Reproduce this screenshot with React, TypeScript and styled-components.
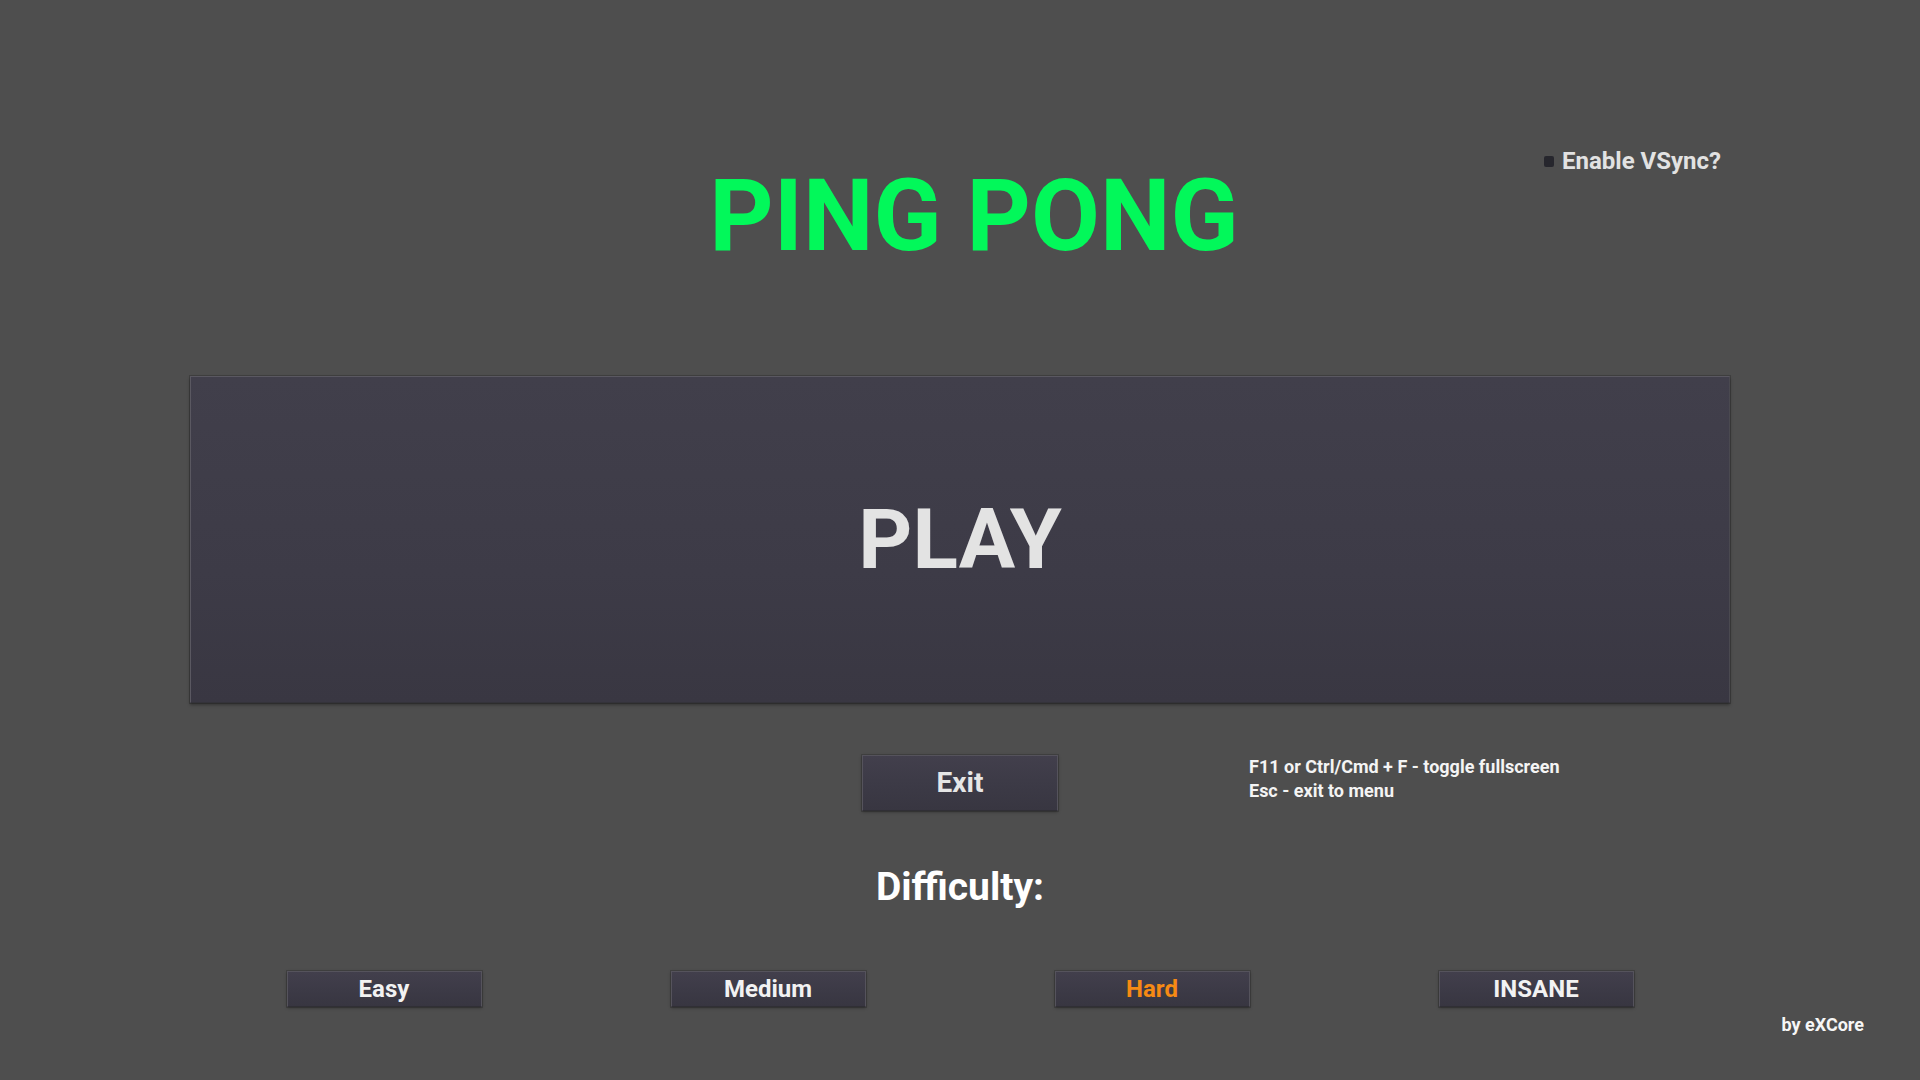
import React, { useState } from "react";
import styled, { createGlobalStyle } from "styled-components";

const GlobalStyle = createGlobalStyle`
  html, body {
    margin: 0;
    padding: 0;
    background: #4e4e4e;
  }
  body {
    font-family: Roboto, "Liberation Sans", sans-serif;
    font-weight: 700;
  }
  * { box-sizing: border-box; }
`;

const Page = styled.div`
  width: 1920px;
  height: 1080px;
  overflow: hidden;
  background: #4e4e4e;
  display: flex;
  flex-direction: column;
`;

const Header = styled.header`
  height: 376px;
  display: grid;
  grid-template-columns: 1fr auto 1fr;
  align-items: start;
`;

const Title = styled.h1`
  grid-column: 2;
  margin: 166px 0 0 28px;
  font-size: 100px;
  line-height: 1;
  font-weight: 700;
  color: #02f85a;
  letter-spacing: 0;
`;

const VSync = styled.label`
  grid-column: 3;
  justify-self: end;
  margin: 149px 199px 0 0;
  display: flex;
  align-items: center;
  gap: 8px;
  font-size: 24px;
  line-height: 1;
  color: #e2e2e2;
  cursor: pointer;
`;

const Box = styled.span<{ $on: boolean }>`
  width: 10px;
  height: 11px;
  border-radius: 2px;
  background: ${(p) => (p.$on ? "#02f85a" : "#26262d")};
  margin-top: 1px;
`;

const PlayPanel = styled.button`
  margin: 0 190px;
  height: 327px;
  border: 1px solid #5a5861;
  border-bottom-color: #34333a;
  border-right-color: #4a4950;
  background: linear-gradient(180deg, #413f4b 0%, #3d3b47 60%, #393742 100%);
  box-shadow: 0 0 0 1px rgba(0, 0, 0, 0.18), 0 2px 3px rgba(0, 0, 0, 0.35);
  display: flex;
  align-items: center;
  justify-content: center;
  font-family: Roboto, "Liberation Sans", sans-serif;
  font-weight: 700;
  font-size: 84px;
  line-height: 1;
  color: #e3e3e3;
  cursor: pointer;
  padding: 0;
`;

const MidRow = styled.div`
  margin-top: 52px;
  display: grid;
  grid-template-columns: 1fr auto 1fr;
  align-items: start;
`;

const Button = styled.button<{ $w: number; $h: number; $size: number; $color?: string }>`
  width: ${(p) => p.$w}px;
  height: ${(p) => p.$h}px;
  border: 1px solid #55535c;
  border-bottom-color: #302f35;
  background: linear-gradient(180deg, #423f4c 0%, #3c3a46 55%, #383641 100%);
  box-shadow: 0 0 0 1px rgba(0, 0, 0, 0.15), 0 1px 3px rgba(0, 0, 0, 0.35);
  font-family: Roboto, "Liberation Sans", sans-serif;
  font-weight: 700;
  font-size: ${(p) => p.$size}px;
  line-height: 1;
  color: ${(p) => p.$color || "#e6e6e6"};
  display: flex;
  align-items: center;
  justify-content: center;
  padding: 0;
  cursor: pointer;
`;

const ExitSlot = styled.div`
  grid-column: 2;
`;

const Help = styled.div`
  grid-column: 3;
  margin: 0 0 0 191px;
  font-size: 18px;
  line-height: 24px;
  color: #f4f4f4;
`;

const DifficultyLabel = styled.h2`
  margin: 57px 0 0;
  text-align: center;
  font-size: 39px;
  line-height: 1;
  font-weight: 700;
  color: #ffffff;
`;

const DiffGrid = styled.div`
  margin: 64px 192px 0;
  display: grid;
  grid-template-columns: repeat(4, 1fr);
  justify-items: center;
`;

const Footer = styled.footer`
  margin-top: 9px;
  padding-right: 56px;
  display: flex;
  justify-content: flex-end;
  font-size: 18px;
  line-height: 1;
  color: #f6f6f6;
`;

const levels = ["Easy", "Medium", "Hard", "INSANE"];

export default function App() {
  const [vsync, setVsync] = useState(false);
  const [level, setLevel] = useState("Hard");
  return (
    <>
      <GlobalStyle />
      <Page>
        <Header>
          <Title>PING PONG</Title>
          <VSync onClick={() => setVsync(!vsync)}>
            <Box $on={vsync} />
            Enable VSync?
          </VSync>
        </Header>
        <PlayPanel>PLAY</PlayPanel>
        <MidRow>
          <ExitSlot>
            <Button $w={196} $h={56} $size={28}>Exit</Button>
          </ExitSlot>
          <Help>
            <div>F11 or Ctrl/Cmd + F - toggle fullscreen</div>
            <div>Esc - exit to menu</div>
          </Help>
        </MidRow>
        <DifficultyLabel>Difficulty:</DifficultyLabel>
        <DiffGrid>
          {levels.map((l) => (
            <Button
              key={l}
              $w={195}
              $h={36}
              $size={24}
              $color={l === level ? "#f68a14" : "#f2f2f2"}
              onClick={() => setLevel(l)}
            >
              {l}
            </Button>
          ))}
        </DiffGrid>
        <Footer>by eXCore</Footer>
      </Page>
    </>
  );
}
